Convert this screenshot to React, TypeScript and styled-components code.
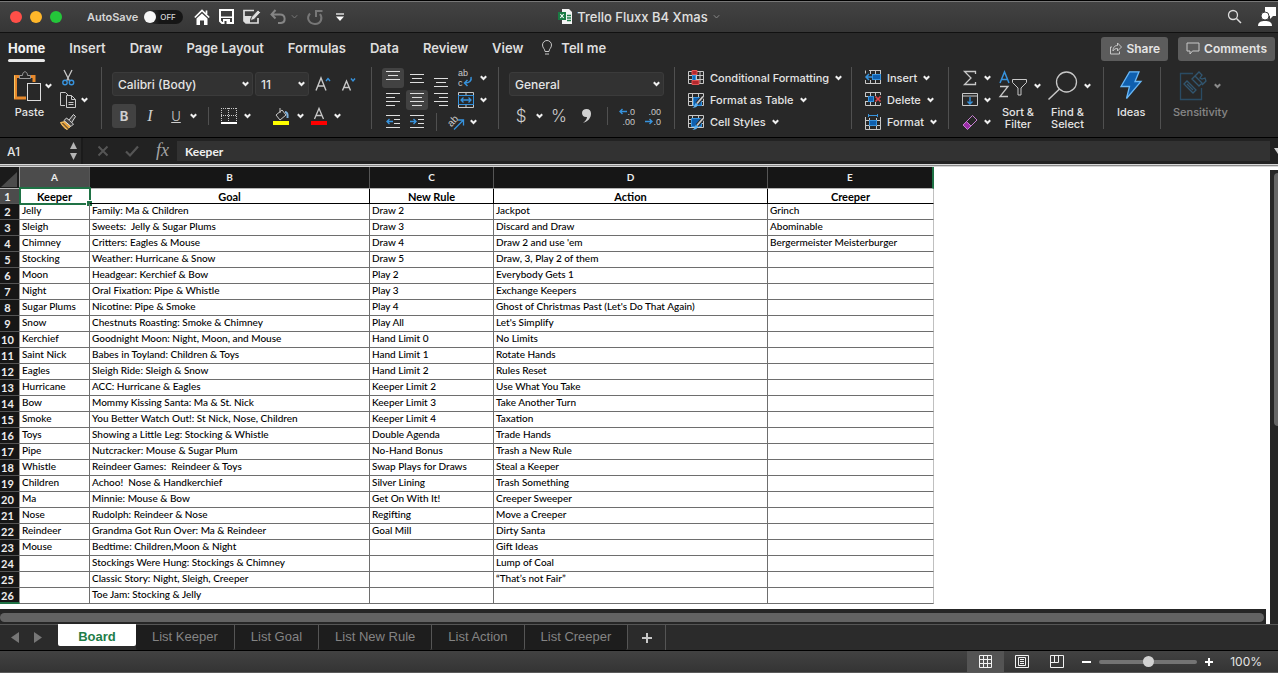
import React from 'react';
import styled, { createGlobalStyle, css } from 'styled-components';

const UI = `Inter, "Liberation Sans", sans-serif`;
const SHEET = `Lato, "Liberation Sans", sans-serif`;
const HELV = `"Liberation Sans", Arial, sans-serif`;
const BLUE = '#3793dd';
const FG = '#e4e4e4';
const LINE = '#c8c8c8';

const Global = createGlobalStyle`
  * { box-sizing: border-box; }
  body { margin: 0; background: #282828; color: ${FG}; font-family: ${UI}; }
  button, input, select { font: inherit; color: inherit; margin: 0; }
  button { background: none; border: 0; padding: 0; }
  svg { display: block; flex: none; overflow: visible; }
`;

const Window = styled.div`
  display: flex;
  flex-direction: column;
  min-height: 100vh;
  overflow: hidden;
`;

/* ---------- title bar ---------- */
const TitleBar = styled.header`
  display: grid;
  grid-template-columns: 1fr auto 1fr;
  align-items: center;
  height: 33px;
  border-top: 1px solid #000;
  border-bottom: 1px solid #111;
  background: linear-gradient(#434343, #363636);
  box-shadow: inset 0 1px #777;
`;
const TitleLeft = styled.div`
  display: flex;
  align-items: center;
  padding-left: 10px;
`;
const Light = styled.button<{ $c: string }>`
  width: 12px;
  height: 12px;
  margin-right: 8px;
  border-radius: 50%;
  background: ${p => p.$c};
`;
const AutoSave = styled.label`
  display: flex;
  align-items: center;
  gap: 6px;
  margin: 0 11px 0 17px;
  font-size: 11px;
  font-weight: 600;
  color: #d6d6d6;
`;
const Toggle = styled.span`
  display: flex;
  align-items: center;
  width: 39px;
  height: 14px;
  gap: 4px;
  border-radius: 7px;
  background: linear-gradient(90deg, #444, #161616 40%);
  font-size: 8px;
  font-weight: 500;
`;
const ToggleBox = styled.input`
  appearance: none;
  width: 12px;
  height: 12px;
  border-radius: 50%;
  background: #f6f6f6;
`;
const QuickTools = styled.div<{ $gap?: number }>`
  display: flex;
  align-items: center;
  gap: ${p => p.$gap ?? 9}px;
`;
const DocTitle = styled.h1`
  display: flex;
  align-items: center;
  gap: 5px;
  margin: 0;
  font-size: 13px;
  line-height: 16px;
  font-weight: 500;
  color: #e0e0e0;
`;
const TitleRight = styled.div`
  display: flex;
  justify-content: flex-end;
  align-items: center;
  gap: 16px;
  padding-right: 2px;
`;

/* ---------- tab row ---------- */
const TabRow = styled.nav`
  display: flex;
  align-items: center;
  height: 31px;
  padding: 0 3px 2px 8px;
  gap: 24px;
`;
const RibbonTab = styled.button<{ $on?: boolean }>`
  position: relative;
  font-size: 13px;
  line-height: 28px;
  font-weight: ${p => (p.$on ? 700 : 600)};
  color: ${p => (p.$on ? '#f2f2f2' : '#dedede')};
  white-space: nowrap;
  ${p => p.$on && css`
    &::after {
      content: '';
      position: absolute;
      left: 0;
      right: 0;
      bottom: 0;
      height: 3px;
      border-radius: 2px;
      background: #e8e8e8;
    }
  `}
`;
const TellMe = styled(RibbonTab)`
  display: flex;
  align-items: center;
  gap: 8px;
  margin-left: -6px;
`;
const TabActions = styled.div`
  display: flex;
  gap: 10px;
  margin-left: auto;
  padding-top: 2px;
`;
const ActionButton = styled.button`
  display: flex;
  align-items: center;
  gap: 4px;
  height: 24px;
  padding: 0 8px;
  border-radius: 3px;
  background: #5c5c5c;
  font-size: 12px;
  font-weight: 600;
`;

/* ---------- ribbon ---------- */
const Ribbon = styled.div`
  display: flex;
  height: 73px;
  padding-top: 3px;
  background: #282828;
`;
const Group = styled.div<{ $w: number; $last?: boolean }>`
  display: flex;
  flex: none;
  width: ${p => p.$w}px;
  height: 62px;
  border-right: ${p => (p.$last ? 0 : '1px solid #505050')};
`;
const Stack = styled.div<{ $pl?: number; $gap?: number; $pt?: number }>`
  display: flex;
  flex-direction: column;
  padding-left: ${p => p.$pl ?? 0}px;
  padding-top: ${p => p.$pt ?? 0}px;
  gap: ${p => p.$gap ?? 0}px;
`;
const Row = styled.div<{ $h: number; $gap?: number }>`
  display: flex;
  align-items: center;
  flex: none;
  height: ${p => p.$h}px;
  gap: ${p => p.$gap ?? 0}px;
`;
const Tool = styled.button<{ $w?: number; $h?: number; $on?: boolean }>`
  display: flex;
  align-items: center;
  justify-content: center;
  flex: none;
  width: ${p => p.$w ?? 24}px;
  height: ${p => p.$h ?? 24}px;
  border-radius: 3px;
  background: ${p => (p.$on ? '#424242' : 'none')};
`;
const Glyph = styled.span<{ $size: number; $b?: boolean; $serif?: boolean }>`
  font-family: ${p => (p.$serif ? '"Liberation Serif", serif' : UI)};
  font-size: ${p => p.$size}px;
  line-height: 20px;
  font-weight: ${p => (p.$b ? 700 : 300)};
  color: #cfcfcf;
`;
const BigTool = styled.button<{ $dim?: boolean }>`
  display: flex;
  flex-direction: column;
  align-items: center;
  padding-top: 4px;
  opacity: ${p => (p.$dim ? 0.5 : 1)};
`;
const BigIcon = styled.span`
  display: flex;
  height: 35px;
  gap: 6px;
`;
const Label = styled.span<{ $menu?: boolean }>`
  margin-right: ${p => (p.$menu ? 4 : 0)}px;
  font-size: 11px;
  line-height: 12px;
  font-weight: 500;
  text-align: center;
`;
const Split = styled.span`
  width: 1px;
  height: 18px;
  background: #505050;
`;
const ItemButton = styled.button`
  display: flex;
  align-items: center;
  flex: none;
  height: 22px;
  gap: 6px;
  font-size: 11px;
  font-weight: 500;
  white-space: nowrap;
`;
const SelectWrap = styled.label<{ $w: number }>`
  display: grid;
  align-items: center;
  width: ${p => p.$w}px;
  height: 24px;
  & > * { grid-area: 1 / 1; }
  & > svg { justify-self: end; margin-right: 4px; pointer-events: none; }
`;
const Select = styled.select`
  appearance: none;
  width: 100%;
  height: 24px;
  padding: 0 5px;
  border: 1px solid #3b3b3b;
  border-radius: 3px;
  background: #323232;
  font-size: 12px;
  font-weight: 500;
`;

/* ---------- formula bar ---------- */
const FormulaBar = styled.div`
  display: flex;
  align-items: center;
  height: 27px;
  border-top: 1px solid #000;
  background: #222;
`;
const NameBox = styled.div`
  display: flex;
  align-items: center;
  justify-content: space-between;
  width: 83px;
  height: 26px;
  padding: 0 4px 0 7px;
  border-right: 2px solid #1b1b1b;
  background: #282828;
`;
const NameInput = styled.input`
  width: 50px;
  border: 0;
  padding: 0;
  background: none;
  font-size: 12px;
  font-weight: 500;
`;
const FormulaTools = styled.div`
  display: flex;
  align-items: center;
  gap: 16px;
  padding: 0 5px 0 14px;
`;
const FormulaInput = styled.input`
  flex: 1;
  min-width: 0;
  height: 20px;
  border: 0;
  padding: 0 8px;
  background: #323232;
  font-family: ${SHEET};
  font-size: 12px;
  font-weight: 700;
  color: #f0f0f0;
`;
const Expand = styled.button`
  width: 8px;
  overflow: hidden;
`;

/* ---------- sheet ---------- */
const SheetEdge = styled.div`
  height: 3px;
  border-top: 1px solid #d8d8d8;
  border-bottom: 1px solid #d8d8d8;
  background: #8a8a8a;
`;
const SheetArea = styled.main`
  display: grid;
  grid-template-columns: minmax(0, 1fr) 8px;
  grid-template-rows: 1fr 15px;
  flex: 1;
  background: #fff;
`;
const Canvas = styled.div`
  overflow: hidden;
  padding-bottom: 5px;
`;
const Grid = styled.table`
  table-layout: fixed;
  width: 934px;
  border-collapse: separate;
  border-spacing: 0;
  font-family: ${SHEET};
  font-size: 10px;
  line-height: 13px;
  font-weight: 500;
  color: #000;
`;
const Corner = styled.th`
  height: 22px;
  padding: 0;
  background: #1b1b1b;
  border-right: 1px solid #999;
  border-bottom: 1px solid #b4b4b4;
  & > svg { margin: 3px 0 0 1px; }
`;
const ColHead = styled.th<{ $on?: boolean; $last?: boolean }>`
  height: 22px;
  padding: 0;
  background: ${p => (p.$on ? '#4c4c4c' : '#161616')};
  border-right: ${p => (p.$last ? '2px solid #1f7245' : '1px solid #555')};
  border-bottom: 1px solid #b4b4b4;
  color: #eee;
  font-size: 10px;
  font-weight: 700;
`;
const RowHead = styled.th<{ $on?: boolean; $last?: boolean }>`
  height: ${p => (p.$on ? 15 : 16)}px;
  padding: 0 4px 0 0;
  text-align: center;
  background: ${p => (p.$on ? '#4c4c4c' : '#161616')};
  border-right: 1px solid #999;
  border-bottom: ${p => (p.$last ? '2px solid #1f7245' : '1px solid #555')};
  color: #eee;
  font-size: 11px;
  font-weight: 700;
`;
const Cell = styled.td<{ $head?: boolean; $edge?: boolean }>`
  position: relative;
  height: ${p => (p.$head ? 15 : 16)}px;
  padding: ${p => (p.$head ? '0 2px' : '0 2px 2px')};
  white-space: pre;
  text-align: ${p => (p.$head ? 'center' : 'left')};
  font-size: ${p => (p.$head ? 11 : 10)}px;
  font-weight: ${p => (p.$head ? 700 : 500)};
  border-right: 1px solid ${p => (p.$edge ? '#c0c0c0' : p.$head ? '#000' : '#6e6e6e')};
  border-bottom: 1px solid ${p => (p.$head ? '#000' : '#6e6e6e')};
`;
const Cursor = styled.span`
  position: absolute;
  inset: -2px -2px -2px -1px;
  border: 2px solid #1f7245;
  &::after {
    content: '';
    position: absolute;
    right: -3px;
    bottom: -3px;
    width: 5px;
    height: 5px;
    background: #1f7245;
    outline: 1px solid #fff;
  }
`;
const VScroll = styled.div`
  grid-row: 1 / 3;
  grid-column: 2;
  margin-top: 3px;
  padding: 3px 0 0 4px;
  background: #262626;
`;
const VThumb = styled.div`
  width: 8px;
  height: 253px;
  border-radius: 4px;
  background: #666;
`;
const HScroll = styled.div`
  margin-right: 4px;
  padding-top: 4px;
  background: #262626;
`;
const HThumb = styled.div`
  height: 9px;
  margin-right: 2px;
  border-radius: 5px;
  background: #636363;
`;

/* ---------- sheet tabs ---------- */
const SheetTabs = styled.div`
  display: flex;
  height: 26px;
  border-top: 1px solid #555;
  background: #2b2b2b;
  font-family: ${HELV};
  font-size: 13px;
`;
const TabNav = styled.div`
  display: flex;
  align-items: center;
  gap: 15px;
  width: 58px;
  padding-left: 11px;
`;
const SheetTab = styled.button<{ $on?: boolean }>`
  height: ${p => (p.$on ? 22 : 25)}px;
  margin-top: ${p => (p.$on ? -1 : 0)}px;
  padding: ${p => (p.$on ? '2px 16px 0' : '0 16px 2px')};
  background: ${p => (p.$on ? '#fff' : '#1d1d1d')};
  color: ${p => (p.$on ? '#1f7d48' : '#848484')};
  font-weight: ${p => (p.$on ? 700 : 400)};
  border-right: ${p => (p.$on ? 0 : '1px solid #555')};
  border-radius: 0 0 2px 2px;
  ${p => p.$on && 'width: 78px;'}
`;
const AddTab = styled.button`
  display: flex;
  align-items: center;
  justify-content: center;
  width: 38px;
  border-right: 1px solid #555;
`;

/* ---------- status bar ---------- */
const StatusBar = styled.footer`
  display: flex;
  align-items: center;
  justify-content: flex-end;
  height: 23px;
  border-top: 1px solid #000;
  border-bottom: 1px solid #5a5a5a;
  background: linear-gradient(#424242, #343434);
`;
const ViewButton = styled.button<{ $on?: boolean }>`
  display: flex;
  align-items: center;
  justify-content: center;
  width: ${p => (p.$on ? 37 : 35)}px;
  height: 21px;
  background: ${p => (p.$on ? '#545454' : 'none')};
`;
const Zoom = styled.div`
  display: flex;
  align-items: center;
  gap: 8px;
  padding: 0 16px 0 8px;
  font-size: 12px;
`;
const ZoomSlider = styled.input`
  appearance: none;
  width: 98px;
  height: 4px;
  border-radius: 2px;
  background: #747474;
  &::-webkit-slider-thumb {
    appearance: none;
    width: 11px;
    height: 11px;
    border-radius: 50%;
    background: #d2d2d2;
  }
`;
const ZoomValue = styled.output`
  padding-left: 9px;
`;

/* ---------- icons ---------- */
const Chev = ({ c = '#f0f0f0', w = 2 }: { c?: string; w?: number }) => (
  <svg width="7" height="6" viewBox="0 0 7 6" fill="none" stroke={c} strokeWidth={w}>
    <path d="M.8 1.2 3.5 4 6.2 1.2" />
  </svg>
);
const Svg = ({ w = 16, h = 16, children }: { w?: number; h?: number; children: React.ReactNode }) => (
  <svg width={w} height={h} viewBox={`0 0 ${w} ${h}`} fill="none" stroke={LINE}>{children}</svg>
);

const PasteIcon = () => (
  <Svg w={31} h={31}>
    <path d="M8 5.500H1.500V27H12M20 11V5.500h-6" stroke="#e8892b" strokeWidth="3" />
    <path d="M.5 4.500V27.500" stroke="#f6c667" />
    <path d="M5.500 7.500V4.500h3c0-5 5-5 5 0h3v3z" fill="#282828" stroke="#999" />
    <rect x="13.500" y="12.500" width="13" height="17" fill="#282828" stroke="#ddd" />
  </Svg>
);
const CutIcon = () => (
  <Svg>
    <path d="M4 0l5.500 11M12 0L6.500 11" strokeWidth="1.300" />
    <circle cx="5" cy="12.500" r="2.200" stroke={BLUE} strokeWidth="1.400" />
    <circle cx="11.500" cy="12.500" r="2.200" stroke={BLUE} strokeWidth="1.400" />
  </Svg>
);
const CopyIcon = () => (
  <Svg>
    <path d="M5 13.500H.5V.5h5l3 3" />
    <path d="M6.500 3.500h5l4 4v8h-9zM11.500 3.500v4h4M8.500 10.500h5M8.500 12.500h5" />
  </Svg>
);
const BrushIcon = () => (
  <Svg>
    <path d="M.5 8.500l4.500-1 5.500 5-3.500 3c-3-1.500-5-4-6.500-7z" fill="#e9a540" stroke="#f6c667" />
    <path d="M2.500 9l6 6" stroke="#282828" />
    <path d="M4 6.500l2.500-2.500 7 6-2.500 2.500z" stroke="#ddd" fill="#444" />
    <path d="M9 6l4.500-5.500 2 2L12 8" stroke="#ddd" fill="#444" />
  </Svg>
);
const Lines = ({ rows, dy = 0 }: { rows: [number, number][]; dy?: number }) => (
  <Svg w={14} h={14}>
    {rows.map(([x, w], i) => <path key={i} d={`M${x} ${dy + i * 4 + 0.5}h${w}`} stroke="#dedede" />)}
  </Svg>
);
const IndentIcon = ({ right }: { right?: boolean }) => (
  <Svg w={14} h={14}>
    <path d="M0 .5h14M8 4.500h6M8 8.500h6M0 12.500h14" stroke="#dedede" />
    <path d={right ? 'M0 6.500h6M3.500 4l2.500 2.500L3.500 9' : 'M7 6.500H1M3.500 4L1 6.500 3.500 9'} stroke={BLUE} strokeWidth="1.400" />
  </Svg>
);
const WrapIcon = () => (
  <Svg w={16} h={20}>
    <text x="0" y="8" fontFamily="Liberation Sans, sans-serif" fontSize="9" fill={LINE} stroke="none">ab</text>
    <text x="0" y="18" fontFamily="Liberation Sans, sans-serif" fontSize="9" fill={LINE} stroke="none">c</text>
    <path d="M13 9c1 4-2 6-6 6M9.500 12L6.500 15l3 3" stroke={BLUE} strokeWidth="1.500" />
  </Svg>
);
const MergeIcon = () => (
  <Svg>
    <path d="M.5 3.500V.5h15v3M8 .5v3M.5 12.500v3h15v-3M8 12.500v3" />
    <rect x=".5" y="3.500" width="15" height="9" stroke={BLUE} />
    <path d="M3 8h10M5.500 5.500L3 8l2.500 2.500M10.500 5.500L13 8l-2.500 2.500" stroke={BLUE} strokeWidth="1.300" />
  </Svg>
);
const OrientIcon = () => (
  <Svg>
    <text x="1" y="10" fontFamily="Liberation Sans, sans-serif" fontSize="10" fill={LINE} stroke="none" transform="rotate(-45 6 9)">ab</text>
    <path d="M6 15.500l9-9M10 6h5.500v5.500" stroke={BLUE} strokeWidth="1.300" />
  </Svg>
);
const BorderIcon = () => (
  <Svg>
    <path d="M.5 0v14M15.500 0v14M7.500 0v14M0 .5h16M0 7.500h16" strokeDasharray="1 1" />
    <path d="M0 15h16" stroke="#fff" strokeWidth="2" />
  </Svg>
);
const FillIcon = () => (
  <Svg w={16} h={17}>
    <path d="M3 7l6-5 4 5-6 5zM7 5V0" />
    <path d="M12 4c2 0 3 2 2.500 6" stroke="#7fb2de" strokeWidth="2" />
    <rect y="13" width="16" height="4" fill="#ff0" stroke="none" />
  </Svg>
);
const FontColorIcon = () => (
  <Svg w={16} h={17}>
    <path d="M3.500 11L8 .5 12.500 11M5 7.500h6" strokeWidth="1.300" />
    <rect y="13" width="16" height="4" fill="red" stroke="none" />
  </Svg>
);
const FontSizeIcon = ({ up }: { up?: boolean }) => (
  <Svg w={16} h={14}>
    <path d={up ? 'M1 13.500L6 1l5 12.500M2.800 9h6.500' : 'M1.500 13.500l4-9.500 4 9.500M3 10.500h5'} strokeWidth="1.400" />
    <path d={up ? 'M11 4l2-2.500L15 4' : 'M10 1.500L12 4l2-2.500'} stroke={BLUE} strokeWidth="1.400" />
  </Svg>
);
const DecimalIcon = ({ less }: { less?: boolean }) => (
  <Svg w={16} h={20}>
    <text x="16" y="9" fontFamily="Liberation Sans, sans-serif" fontSize="9" textAnchor="end" fill={LINE} stroke="none">{less ? '.00' : '.0'}</text>
    <text x="16" y="19" fontFamily="Liberation Sans, sans-serif" fontSize="9" textAnchor="end" fill={LINE} stroke="none">{less ? '.0' : '.00'}</text>
    <path d={less ? 'M0 15.500h7M4.500 13L7 15.500l-2.500 2.500' : 'M8 5.500H1M3.500 3L1 5.500l2.500 2.500'} stroke={BLUE} strokeWidth="1.400" />
  </Svg>
);
const CondIcon = () => (
  <Svg>
    <path d="M.5 1.500h15v12H.5zM.5 5.500h15M.5 9.500h15M4.500 1v13M8.500 1v13M12 1v13" />
    <rect x="4.500" y="5.500" width="3" height="5" fill="#0f6cbd" stroke={BLUE} />
    <path d="M4 .5h5v4H4zM4 10.500h7v4H4z" fill="#b3272d" stroke="#e05252" />
  </Svg>
);
const TableIcon = ({ full }: { full?: boolean }) => (
  <Svg>
    <path d="M.5 1.500h15v12H.5zM.5 5.500h15M.5 9.500h15M4.500 1v13M10.500 1v13" />
    <path d={full ? 'M3.500 4.500h10v8h-10z' : 'M5.500 5.500h8v8h-8z'} fill="#0f5fae" stroke={BLUE} />
    <path d="M15 4.500l-6 7" stroke="#282828" strokeWidth="3.500" />
    <path d="M15 4.500l-6 7" stroke="#ccc" strokeWidth="1.800" />
    <path d="M4 15.500c3 0 2-3 4-4.500l2 2c-1 2-3 3-6 2.500z" fill="#5db0ef" stroke="none" />
  </Svg>
);
const InsertIcon = () => (
  <Svg>
    <path d="M4 .5h11.500M.5 .5v3M.5 10v3.500h15M10.500 1v12M5.500 1v3M5.500 10v3M15.500 0v14" />
    <rect x="7.500" y="4.500" width="8" height="5" fill="#0f5fae" stroke={BLUE} />
    <path d="M8 7H1M4 4L1 7l3 3" stroke={BLUE} strokeWidth="1.500" />
  </Svg>
);
const DeleteIcon = () => (
  <Svg>
    <path d="M.5 4V.5h15V3M.5 10v3.500h15V11M5.500 1v12M10.500 1v3M10.500 10v3M0 4.500h4M0 9.500h4" />
    <rect x="3.500" y="4.500" width="5" height="5" fill="#0f5fae" stroke={BLUE} />
    <path d="M10.500 4.500l5 5M15.500 4.500l-5 5" stroke="#e0464b" strokeWidth="1.700" />
  </Svg>
);
const FormatIcon = () => (
  <Svg>
    <path d="M.5 3v12.500h15V3M4.500 4v11M11.500 4v11M0 6.500h16M0 11.500h16" />
    <rect x="4.500" y="6.500" width="7" height="5" fill="#0f5fae" stroke={BLUE} />
    <path d="M3.500 0v3M12.500 0v3M3 1.500h10" stroke={BLUE} />
  </Svg>
);
const SumIcon = () => (
  <Svg><path d="M13.500 4V1.500h-11L9 8l-6.500 6.500h11V12" strokeWidth="1.300" /></Svg>
);
const FillDownIcon = () => (
  <Svg>
    <path d="M.5 1.500h15v12H.5zM.5 4h15" />
    <path d="M8 5v7M5.500 9.500L8 12l2.500-2.500" stroke={BLUE} strokeWidth="1.400" />
  </Svg>
);
const EraserIcon = () => (
  <Svg>
    <path d="M1 11L10.500 1.500 15 6l-9 9z" stroke="#c77fd1" />
    <path d="M1 11l3.500-3.500 4.500 4.500-3.500 3.500z" fill="#9c2fa8" stroke="#c77fd1" />
  </Svg>
);
const SortIcon = () => (
  <Svg w={29} h={27}>
    <path d="M1 12L5.500 1 10 12M2.500 8.500h6" stroke={BLUE} strokeWidth="1.500" />
    <path d="M1 15.500h8L1 25.500h8" strokeWidth="1.300" />
    <path d="M13.500 8.500h14v3l-5.500 5.500v7h-3v-7l-5.500-5.500z" />
  </Svg>
);
const FindIcon = () => (
  <Svg w={30} h={29}>
    <circle cx="18.500" cy="11" r="10" strokeWidth="1.300" />
    <path d="M11.500 18L.5 28.500" strokeWidth="1.500" />
  </Svg>
);
const IdeasIcon = () => (
  <Svg w={22} h={29}>
    <path d="M9.500.8h9.500L15 10.500h6L6.500 27.500l3-12H1z" fill="#0f5fae" stroke="#69b7f5" strokeWidth="1.300" />
  </Svg>
);
const SensIcon = () => (
  <Svg w={29} h={31}>
    <path d="M14 2.500H1.500v26h21V17" stroke="#2c6f9e" strokeWidth="1.300" />
    <path d="M5 13l3-3 9 9-3 3zM8 13l6 6" stroke="#3b85b8" strokeWidth="1.300" />
    <path d="M13 8l3-3 7 7-3 3zM16 5l4-4 3 3-2 3 2 1 3-1 1 3-4 4" stroke="#3b85b8" strokeWidth="1.300" />
  </Svg>
);
const HomeIcon = () => (
  <Svg>
    <path d="M.8 8.500L8 1.500l7.200 7M12.500 5V1.500" stroke="#fff" strokeWidth="1.700" />
    <path d="M2.500 9.500L8 4.500l5.500 5V16H10v-4.500H6V16H2.500z" fill="#fff" stroke="none" />
  </Svg>
);
const SaveIcon = () => (
  <Svg w={15} h={15}>
    <path d="M1 1h13v13H3L1 12z" stroke="#fff" strokeWidth="2" />
    <path d="M1 7.500h13v1.500H1zM4 10h7v5H4z" fill="#fff" stroke="none" />
    <path d="M5.500 12h2v3h-2z" fill="#3c3c3c" stroke="none" />
  </Svg>
);
const SaveEditIcon = () => (
  <Svg w={18} h={16}>
    <path d="M11 1.500H1V12l2 2h12V9" stroke="#ddd" strokeWidth="1.700" />
    <path d="M1 7h8l-2 4v3H3l-2-2z" fill="#ddd" stroke="none" />
    <path d="M7.500 11.500l1-3.500L15 1l2.500 2.500-6.500 7z" fill="#ddd" stroke="#3c3c3c" strokeWidth=".8" />
  </Svg>
);
const UndoIcon = () => (
  <Svg><path d="M5.500 1L1.500 5.500l4 4M2 5.500h8c6 0 6 8 1 8.500H8" stroke="#858585" strokeWidth="2" /></Svg>
);
const RedoIcon = () => (
  <Svg>
    <path d="M3 4.500C-1 9 2 15 8 15c6 0 8-6 5-10" stroke="#777" strokeWidth="2" />
    <path d="M9 8V2h6.500" stroke="#777" strokeWidth="2" />
  </Svg>
);
const MoreIcon = () => (
  <Svg w={8} h={8}>
    <path d="M0 1h8" stroke="#ddd" strokeWidth="1.500" />
    <path d="M0 3.500h8L4 8z" fill="#fff" stroke="none" />
  </Svg>
);
const FileIcon = () => (
  <Svg w={14} h={15}>
    <path d="M4 0h7l3 3v12H4z" fill="#f4f4f4" stroke="none" />
    <path d="M9 6.500h4M9 9h4M9 11.500h4" stroke="#1f7d48" strokeWidth="1.500" />
    <rect y="3" width="8" height="8" fill="#1a7a43" stroke="none" />
    <path d="M2.300 5l3.400 4M5.700 5L2.300 9" stroke="#fff" strokeWidth="1.100" />
  </Svg>
);
const SearchIcon = () => (
  <Svg w={15} h={15}>
    <circle cx="6" cy="6" r="4.500" stroke="#ddd" strokeWidth="1.300" />
    <path d="M9.500 9.500l4.500 4.500" stroke="#ddd" strokeWidth="1.500" />
  </Svg>
);
const PeopleIcon = () => (
  <Svg w={18} h={19}>
    <path d="M7 0h11v9h-3l-3 3V9H7z" fill="#fff" stroke="none" />
    <circle cx="7" cy="9" r="4" fill="#fff" stroke="#3e3e3e" />
    <path d="M0 19c0-4 3-5 7-5s7 1 7 5z" fill="#fff" stroke="none" />
  </Svg>
);
const BulbIcon = () => (
  <Svg w={12} h={15}>
    <path d="M4 11.500C4 9 1.500 8 1.500 5a4.500 4.500 0 0 1 9 0c0 3-2.500 4-2.500 6.500zM4 14h4" />
  </Svg>
);
const ShareIcon = () => (
  <Svg w={13} h={13}>
    <path d="M3 5H1.500v7h9V9.500" />
    <path d="M4 9c0-4 2-5.500 4.500-5.500V1l4 4-4 4V6.500C6.500 6.500 5 7 4 9z" />
  </Svg>
);
const CommentIcon = () => (
  <Svg w={14} h={13}><path d="M1 1h12v8H6.500L4 12V9H1z" /></Svg>
);
const Tri = ({ d, c = '#777', w = 8, h = 8 }: { d: string; c?: string; w?: number; h?: number }) => (
  <svg width={w} height={h} viewBox="0 0 8 8" preserveAspectRatio="none"><path d={d} fill={c} /></svg>
);

/* ---------- data ---------- */
const LETTERS = ['A', 'B', 'C', 'D', 'E'];
const HEADS = ['Keeper', 'Goal', 'New Rule', 'Action', 'Creeper'];
const WIDTHS = [70, 280, 124, 274, 166];
const COLUMNS = [
  ['Jelly', 'Sleigh', 'Chimney', 'Stocking', 'Moon', 'Night', 'Sugar Plums', 'Snow', 'Kerchief', 'Saint Nick', 'Eagles', 'Hurricane', 'Bow', 'Smoke', 'Toys', 'Pipe', 'Whistle', 'Children', 'Ma', 'Nose', 'Reindeer', 'Mouse'],
  ['Family: Ma & Children', 'Sweets:  Jelly & Sugar Plums', 'Critters: Eagles & Mouse', 'Weather: Hurricane & Snow', 'Headgear: Kerchief & Bow', 'Oral Fixation: Pipe & Whistle', 'Nicotine: Pipe & Smoke', 'Chestnuts Roasting: Smoke & Chimney', 'Goodnight Moon: Night, Moon, and Mouse', 'Babes in Toyland: Children & Toys', 'Sleigh Ride: Sleigh & Snow', 'ACC: Hurricane & Eagles', 'Mommy Kissing Santa: Ma & St. Nick', 'You Better Watch Out!: St Nick, Nose, Children', 'Showing a Little Leg: Stocking & Whistle', 'Nutcracker: Mouse & Sugar Plum', 'Reindeer Games:  Reindeer & Toys', 'Achoo!  Nose & Handkerchief', 'Minnie: Mouse & Bow', 'Rudolph: Reindeer & Nose', 'Grandma Got Run Over: Ma & Reindeer', 'Bedtime: Children,Moon & Night', 'Stockings Were Hung: Stockings & Chimney', 'Classic Story: Night, Sleigh, Creeper', 'Toe Jam: Stocking & Jelly'],
  ['Draw 2', 'Draw 3', 'Draw 4', 'Draw 5', 'Play 2', 'Play 3', 'Play 4', 'Play All', 'Hand Limit 0', 'Hand Limit 1', 'Hand Limit 2', 'Keeper Limit 2', 'Keeper Limit 3', 'Keeper Limit 4', 'Double Agenda', 'No-Hand Bonus', 'Swap Plays for Draws', 'Silver Lining', 'Get On With It!', 'Regifting', 'Goal Mill'],
  ['Jackpot', 'Discard and Draw', "Draw 2 and use 'em", 'Draw, 3, Play 2 of them', 'Everybody Gets 1', 'Exchange Keepers', "Ghost of Christmas Past (Let's Do That Again)", "Let's Simplify", 'No Limits', 'Rotate Hands', 'Rules Reset', 'Use What You Take', 'Take Another Turn', 'Taxation', 'Trade Hands', 'Trash a New Rule', 'Steal a Keeper', 'Trash Something', 'Creeper Sweeper', 'Move a Creeper', 'Dirty Santa', 'Gift Ideas', 'Lump of Coal', '“That’s not Fair”'],
  ['Grinch', 'Abominable', 'Bergermeister Meisterburger'],
];
const ROWS = Array.from({ length: 25 }, (_, r) => COLUMNS.map(c => c[r] ?? ''));

const LEFT: [number, number][] = [[0, 14], [0, 9], [0, 14], [0, 9]];
const CENTER: [number, number][] = [[0, 14], [2, 10], [0, 14], [2, 10]];
const RIGHT: [number, number][] = [[0, 14], [5, 9], [0, 14], [5, 9]];

export default function App() {
  return (
    <Window>
      <Global />
      <TitleBar>
        <TitleLeft>
          <Light $c="#ff4f48" aria-label="Close" />
          <Light $c="#ffb72a" aria-label="Minimize" />
          <Light $c="#24c63a" aria-label="Full screen" />
          <AutoSave>
            AutoSave
            <Toggle><ToggleBox type="checkbox" />OFF</Toggle>
          </AutoSave>
          <QuickTools>
            <button aria-label="Home"><HomeIcon /></button>
            <button aria-label="Save"><SaveIcon /></button>
            <button aria-label="Save as"><SaveEditIcon /></button>
            <QuickTools $gap={5}>
              <button aria-label="Undo"><UndoIcon /></button>
              <button aria-label="Undo history"><Chev c="#777" w={1} /></button>
            </QuickTools>
            <button aria-label="Redo"><RedoIcon /></button>
            <Tool $w={16} aria-label="Customize"><MoreIcon /></Tool>
          </QuickTools>
        </TitleLeft>
        <DocTitle><FileIcon />Trello Fluxx B4 Xmas<Chev c="#888" w={1} /></DocTitle>
        <TitleRight>
          <button aria-label="Search"><SearchIcon /></button>
          <button aria-label="Presence"><PeopleIcon /></button>
        </TitleRight>
      </TitleBar>

      <TabRow>
        <RibbonTab $on>Home</RibbonTab>
        {['Insert', 'Draw', 'Page Layout', 'Formulas', 'Data', 'Review', 'View'].map(t => <RibbonTab key={t}>{t}</RibbonTab>)}
        <TellMe><BulbIcon />Tell me</TellMe>
        <TabActions>
          <ActionButton><ShareIcon />Share</ActionButton>
          <ActionButton><CommentIcon />Comments</ActionButton>
        </TabActions>
      </TabRow>

      <Ribbon>
        <Group $w={102}>
          <Stack $pl={14}>
            <BigTool>
              <BigIcon><PasteIcon /></BigIcon>
              <Label>Paste</Label>
            </BigTool>
          </Stack>
          <Stack $pt={16}><Chev /></Stack>
          <Stack $pl={8}>
            <Row $h={22} $gap={5}><button aria-label="Cut"><CutIcon /></button></Row>
            <Row $h={22} $gap={5}><button aria-label="Copy"><CopyIcon /></button><Chev /></Row>
            <Row $h={22} $gap={5}><button aria-label="Format painter"><BrushIcon /></button></Row>
          </Stack>
        </Group>

        <Group $w={270}>
          <Stack $pl={10} $pt={5} $gap={8}>
            <Row $h={24} $gap={2}>
              <SelectWrap $w={141}><Select aria-label="Font"><option>Calibri (Body)</option></Select><Chev /></SelectWrap>
              <SelectWrap $w={54}><Select aria-label="Font size"><option>11</option></Select><Chev /></SelectWrap>
              <Tool aria-label="Increase font size"><FontSizeIcon up /></Tool>
              <Tool aria-label="Decrease font size"><FontSizeIcon /></Tool>
            </Row>
            <Row $h={24} $gap={2}>
              <Tool $on><Glyph $size={13} $b>B</Glyph></Tool>
              <Tool><Glyph $size={16} $serif><i>I</i></Glyph></Tool>
              <Tool><Glyph $size={13}><u>U</u></Glyph></Tool>
              <Chev />
              <Tool $w={18}><Split /></Tool>
              <Tool $w={20} aria-label="Borders"><BorderIcon /></Tool>
              <Tool $w={12} aria-label="Border options"><Chev /></Tool>
              <Tool $w={10}> </Tool>
              <Tool $w={28} aria-label="Fill color"><FillIcon /></Tool>
              <Chev />
              <Tool $w={26} aria-label="Font color"><FontColorIcon /></Tool>
              <Chev />
            </Row>
          </Stack>
        </Group>

        <Group $w={127}>
          <Stack $pl={10}>
            <Row $h={22} $gap={2}>
              <Tool $w={22} $h={20} $on aria-label="Top"><Lines rows={CENTER.slice(0, 3)} /></Tool>
              <Tool $w={22} $h={20} aria-label="Middle"><Lines rows={CENTER.slice(0, 3)} dy={3} /></Tool>
              <Tool $w={22} $h={20} aria-label="Bottom"><Lines rows={CENTER.slice(0, 3)} dy={7} /></Tool>
              <Tool $w={24} $h={20} aria-label="Wrap text"><WrapIcon /></Tool>
              <Chev />
            </Row>
            <Row $h={22} $gap={2}>
              <Tool $w={22} $h={20} aria-label="Left"><Lines rows={LEFT} /></Tool>
              <Tool $w={22} $h={20} $on aria-label="Center"><Lines rows={CENTER} /></Tool>
              <Tool $w={22} $h={20} aria-label="Right"><Lines rows={RIGHT} /></Tool>
              <Tool $w={24} $h={20} aria-label="Merge"><MergeIcon /></Tool>
              <Chev />
            </Row>
            <Row $h={22} $gap={2}>
              <Tool $w={22} $h={20} aria-label="Decrease indent"><IndentIcon /></Tool>
              <Tool $w={22} $h={20} aria-label="Increase indent"><IndentIcon right /></Tool>
              <Tool $w={12} $h={20}><Split /></Tool>
              <Tool $w={24} $h={20} aria-label="Orientation"><OrientIcon /></Tool>
              <Chev />
            </Row>
          </Stack>
        </Group>

        <Group $w={176}>
          <Stack $pl={10} $pt={5} $gap={8}>
            <Row $h={24}>
              <SelectWrap $w={155}><Select aria-label="Number format"><option>General</option></Select><Chev /></SelectWrap>
            </Row>
            <Row $h={24}>
              <Tool><Glyph $size={17}>$</Glyph></Tool>
              <Tool $w={12} aria-label="Currency options"><Chev /></Tool>
              <Tool $w={28}><Glyph $size={17}>%</Glyph></Tool>
              <Tool $w={26} aria-label="Comma style">
                <Svg w={9} h={14}><path d="M4.500 0C7.500 0 9 2 9 4.500 9 9 6 12.500 1 14c2.500-2 4-4 4-6C2 8.500 0 6.500 0 4 0 1.500 2 0 4.500 0z" fill="#d0d0d0" stroke="none" /></Svg>
              </Tool>
              <Tool $w={16}><Split /></Tool>
              <Tool aria-label="Increase decimal"><DecimalIcon /></Tool>
              <Tool $w={28} aria-label="Decrease decimal"><DecimalIcon less /></Tool>
            </Row>
          </Stack>
        </Group>

        <Group $w={177}>
          <Stack $pl={13}>
            <ItemButton><CondIcon />Conditional Formatting<Chev /></ItemButton>
            <ItemButton><TableIcon />Format as Table<Chev /></ItemButton>
            <ItemButton><TableIcon full />Cell Styles<Chev /></ItemButton>
          </Stack>
        </Group>

        <Group $w={97}>
          <Stack $pl={13}>
            <ItemButton><InsertIcon />Insert<Chev /></ItemButton>
            <ItemButton><DeleteIcon />Delete<Chev /></ItemButton>
            <ItemButton><FormatIcon />Format<Chev /></ItemButton>
          </Stack>
        </Group>

        <Group $w={155}>
          <Stack $pl={13}>
            <ItemButton aria-label="AutoSum"><SumIcon /><Chev /></ItemButton>
            <ItemButton aria-label="Fill"><FillDownIcon /><Chev /></ItemButton>
            <ItemButton aria-label="Clear"><EraserIcon /><Chev /></ItemButton>
          </Stack>
          <Stack $pl={8}>
            <BigTool>
              <BigIcon><SortIcon /><Stack $pt={12}><Chev /></Stack></BigIcon>
              <Label $menu>Sort &amp;<br />Filter</Label>
            </BigTool>
          </Stack>
          <Stack $pl={7}>
            <BigTool>
              <BigIcon><FindIcon /><Stack $pt={12}><Chev /></Stack></BigIcon>
              <Label $menu>Find &amp;<br />Select</Label>
            </BigTool>
          </Stack>
        </Group>

        <Group $w={57}>
          <Stack $pl={13}>
            <BigTool><BigIcon><IdeasIcon /></BigIcon><Label>Ideas</Label></BigTool>
          </Stack>
        </Group>

        <Group $w={80} $last>
          <Stack $pl={12}>
            <BigTool $dim>
              <BigIcon><SensIcon /><Stack $pt={12}><Chev /></Stack></BigIcon>
              <Label>Sensitivity</Label>
            </BigTool>
          </Stack>
        </Group>
      </Ribbon>

      <FormulaBar>
        <NameBox>
          <NameInput aria-label="Name box" defaultValue="A1" />
          <Stack $gap={4}>
            <Tri d="M4 0l4 8H0z" c="#b5b5b5" w={7} h={7} />
            <Tri d="M0 0h8L4 8z" c="#b5b5b5" w={7} h={7} />
          </Stack>
        </NameBox>
        <FormulaTools>
          <button aria-label="Cancel"><Svg w={12} h={12}><path d="M1.500 1.500l9 9M10.500 1.500l-9 9" stroke="#555" strokeWidth="2" /></Svg></button>
          <button aria-label="Enter"><Svg w={14} h={12}><path d="M1 6.500l4 4 8-9" stroke="#555" strokeWidth="2.200" /></Svg></button>
          <button aria-label="Insert function">
            <svg width="17" height="18" viewBox="0 0 17 18"><text x="1" y="14" fontFamily="Liberation Serif, serif" fontStyle="italic" fontSize="18" fill="#a5a5a5">fx</text></svg>
          </button>
        </FormulaTools>
        <FormulaInput aria-label="Formula" defaultValue="Keeper" />
        <Expand aria-label="Expand formula bar"><svg width="12" height="8" viewBox="0 0 12 8"><path d="M4 1h8L8 7z" fill="#d0d0d0" /></svg></Expand>
      </FormulaBar>

      <SheetEdge />
      <SheetArea>
        <Canvas>
          <Grid>
            <colgroup>
              <col width={20} />
              {WIDTHS.map((w, i) => <col key={i} width={w} />)}
            </colgroup>
            <thead>
              <tr>
                <Corner><svg width="16" height="15" viewBox="0 0 16 15"><path d="M16 0v15H0z" fill="#4c4c4c" /></svg></Corner>
                {LETTERS.map((l, i) => <ColHead key={l} $on={i === 0} $last={i === 4}>{l}</ColHead>)}
              </tr>
            </thead>
            <tbody>
              <tr>
                <RowHead $on>1</RowHead>
                {HEADS.map((h, i) => <Cell key={h} $head $edge={i === 4}>{h}{i === 0 && <Cursor />}</Cell>)}
              </tr>
              {ROWS.map((row, r) => (
                <tr key={r}>
                  <RowHead $last={r === 24}>{r + 2}</RowHead>
                  {row.map((v, c) => <Cell key={c} $edge={c === 4}>{v}</Cell>)}
                </tr>
              ))}
            </tbody>
          </Grid>
        </Canvas>
        <VScroll><VThumb /></VScroll>
        <HScroll><HThumb /></HScroll>
      </SheetArea>

      <SheetTabs>
        <TabNav>
          <button aria-label="Previous sheet"><Tri d="M8 0v8L0 4z" h={11} /></button>
          <button aria-label="Next sheet"><Tri d="M0 0l8 4-8 4z" h={11} /></button>
        </TabNav>
        <SheetTab $on>Board</SheetTab>
        {['List Keeper', 'List Goal', 'List New Rule', 'List Action', 'List Creeper'].map(t => <SheetTab key={t}>{t}</SheetTab>)}
        <AddTab aria-label="Add sheet"><Svg w={10} h={10}><path d="M5 0v10M0 5h10" strokeWidth="2" /></Svg></AddTab>
      </SheetTabs>

      <StatusBar>
        <ViewButton $on aria-label="Normal view"><Svg w={13} h={13}><path d="M.5.5h12v12H.5zM.5 4.500h12M.5 8.500h12M4.500.5v12M8.500.5v12" stroke="#f2f2f2" /></Svg></ViewButton>
        <ViewButton aria-label="Page layout view"><Svg w={14} h={13}><path d="M.5.5h13v12H.5zM3.500 2.500h7v8h-7zM5 4.500h4M5 6.500h4M5 8.500h4" stroke="#f2f2f2" /></Svg></ViewButton>
        <ViewButton aria-label="Page break view"><Svg w={14} h={13}><path d="M.5.5h13v12H.5zM4.500.5v7M8.500.5v7M.5 7.500h8" stroke="#f2f2f2" /></Svg></ViewButton>
        <Zoom>
          <button aria-label="Zoom out"><Svg w={9} h={8}><path d="M0 4h9" stroke="#fff" strokeWidth="2" /></Svg></button>
          <ZoomSlider type="range" min={0} max={200} defaultValue={100} aria-label="Zoom" />
          <button aria-label="Zoom in"><Svg w={8} h={8}><path d="M0 4h8M4 0v8" stroke="#fff" strokeWidth="2" /></Svg></button>
          <ZoomValue>100%</ZoomValue>
        </Zoom>
      </StatusBar>
    </Window>
  );
}
